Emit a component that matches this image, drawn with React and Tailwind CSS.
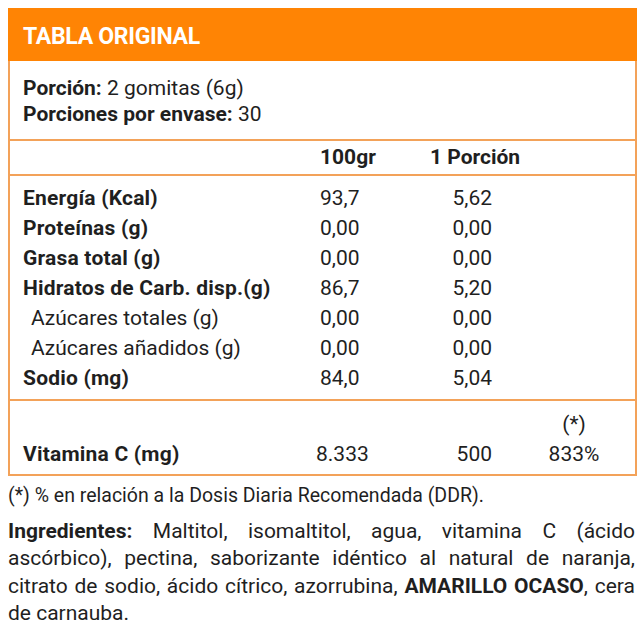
export default function App() {
  const rows = [
    { label: "Energía (Kcal)", a: "93,7", b: "5,62", bold: true },
    { label: "Proteínas (g)", a: "0,00", b: "0,00", bold: true },
    { label: "Grasa total (g)", a: "0,00", b: "0,00", bold: true },
    { label: "Hidratos de Carb. disp.(g)", a: "86,7", b: "5,20", bold: true },
    { label: "Azúcares totales (g)", a: "0,00", b: "0,00", bold: false },
    { label: "Azúcares añadidos (g)", a: "0,00", b: "0,00", bold: false },
    { label: "Sodio (mg)", a: "84,0", b: "5,04", bold: true },
  ];

  return (
    <div className="w-[640px] h-[640px] bg-white pt-[8px] pl-[8px] pr-[3px] font-['Roboto',sans-serif] text-[#1f1f1f]">
      <div className="border-x-2 border-b-2 border-[#f3a259]">
        {/* Header */}
        <div className="h-[53px] bg-[#ff8404] flex items-center -mx-[2px] pl-[15px] pt-[5px]">
          <span className="text-white font-bold text-[23px] tracking-[-0.3px]">TABLA ORIGINAL</span>
        </div>

        {/* Portion */}
        <div className="h-[80px] pl-[13px] pt-[14px] text-[21px] leading-[26px] border-b-2 border-[#f3a259]">
          <p><span className="font-bold">Porción:</span> 2 gomitas (6g)</p>
          <p><span className="font-bold">Porciones por envase:</span> 30</p>
        </div>

        {/* Column header */}
        <div className="h-[35px] pl-[13px] grid grid-cols-[297px_110px_118px_1fr] items-center text-[21px] font-bold border-b-2 border-[#f3a259]">
          <span></span>
          <span>100gr</span>
          <span>1 Porción</span>
          <span></span>
        </div>

        {/* Nutrients */}
        <div className="pl-[13px] pt-[7px] pb-[6px] border-b-2 border-[#f3a259] text-[21px]">
          {rows.map((r) => (
            <div key={r.label} className="grid grid-cols-[297px_110px_118px_1fr] h-[30px] items-center">
              <span className={r.bold ? "font-bold tracking-[0.2px]" : "pl-[8px]"}>{r.label}</span>
              <span>{r.a}</span>
              <span className="w-[62px] text-right">{r.b}</span>
              <span></span>
            </div>
          ))}
        </div>

        {/* Vitamin C */}
        <div className="h-[73px] pl-[13px] pt-[8px] text-[21px]">
          <div className="grid grid-cols-[297px_110px_118px_1fr] h-[26px] items-center">
            <span></span>
            <span></span>
            <span></span>
            <span className="w-[52px] text-center">(*)</span>
          </div>
          <div className="grid grid-cols-[297px_110px_118px_1fr] h-[32px] pt-[4px] items-center">
            <span className="font-bold tracking-[0.2px]">Vitamina C (mg)</span>
            <span className="-ml-[4px]">8.333</span>
            <span className="w-[62px] text-right">500</span>
            <span className="w-[52px] text-center">833%</span>
          </div>
        </div>
      </div>

      {/* Footnote */}
      <p className="mt-[8px] text-[19.5px] leading-[24px]">(*) % en relación a la Dosis Diaria Recomendada (DDR).</p>

      {/* Ingredients */}
      <div className="mt-[10px] pr-[2px] text-[21px] leading-[27.3px]">
        <p className="text-justify [text-align-last:justify]">
          <span className="font-bold">Ingredientes:</span> Maltitol, isomaltitol, agua, vitamina C (ácido
        </p>
        <p className="text-justify [text-align-last:justify]">
          ascórbico), pectina, saborizante idéntico al natural de naranja,
        </p>
        <p className="text-justify [text-align-last:justify]">
          citrato de sodio, ácido cítrico, azorrubina, <span className="font-bold">AMARILLO OCASO</span>, cera
        </p>
        <p>de carnauba.</p>
      </div>
    </div>
  );
}
